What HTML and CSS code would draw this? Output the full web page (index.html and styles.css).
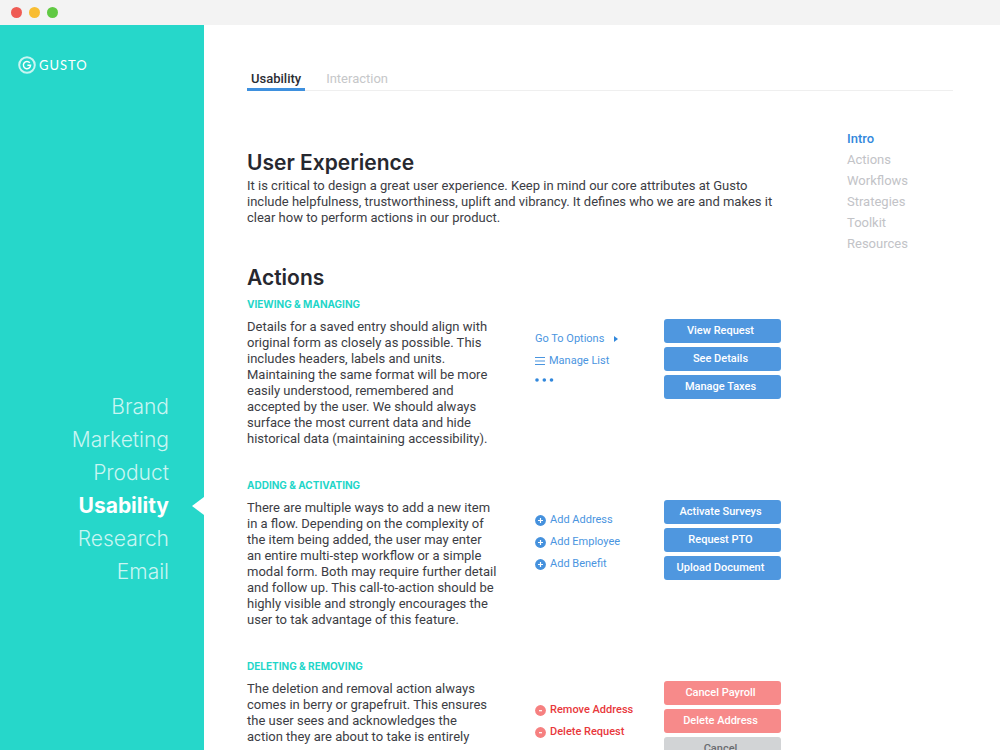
FILE: index.html
```html
<!DOCTYPE html>
<html lang="en">
<head>
<meta charset="utf-8">
<title>Gusto – Usability</title>
<link rel="stylesheet" href="styles.css">
</head>
<body>
<div class="window">
  <header class="titlebar">
    <span class="dot dot-red"></span>
    <span class="dot dot-yellow"></span>
    <span class="dot dot-green"></span>
  </header>
  <div class="shell">
    <aside class="sidebar">
      <a class="logo" href="#">
        <svg class="logo-mark" viewBox="0 0 18 18" aria-hidden="true">
          <circle cx="9" cy="9" r="7.8" fill="none" stroke="#fff" stroke-opacity=".75" stroke-width="2"/>
          <path d="M11.800 6.800A3.600 3.600 0 1 0 12.600 9.300H9.400" fill="none" stroke="#fff" stroke-width="1.400"/>
        </svg>
        <span class="logo-text">GUSTO</span>
      </a>
      <nav class="side-nav">
        <a href="#">Brand</a>
        <a href="#">Marketing</a>
        <a href="#">Product</a>
        <a class="active" href="#">Usability</a>
        <a href="#">Research</a>
        <a href="#">Email</a>
      </nav>
    </aside>
    <main class="main">
      <nav class="tabs">
        <a class="tab active" href="#">Usability</a>
        <a class="tab" href="#">Interaction</a>
      </nav>
      <div class="content">
        <div class="article">
          <section class="intro">
            <h1>User Experience</h1>
            <p>It is critical to design a great user experience. Keep in mind our core attributes at Gusto<br>include helpfulness, trustworthiness, uplift and vibrancy. It defines who we are and makes it<br>clear how to perform actions in our product.</p>
          </section>
          <h1>Actions</h1>
          <section class="block">
            <h2>VIEWING &amp; MANAGING</h2>
            <div class="row">
              <p>Details for a saved entry should align with<br>original form as closely as possible. This<br>includes headers, labels and units.<br>Maintaining the same format will be more<br>easily understood, remembered and<br>accepted by the user. We should always<br>surface the most current data and hide<br>historical data (maintaining accessibility).</p>
              <div class="links">
                <a href="#">Go To Options <svg class="caret" viewBox="0 0 4 6"><path d="M0 0 4 3 0 6z" fill="#3288dc"/></svg></a>
                <a href="#"><svg class="bars" viewBox="0 0 10 10"><path d="M0 1.5h10M0 5h10M0 8.5h10" stroke="#4a95df" stroke-width="1.2"/></svg>Manage List</a>
                <a class="more" href="#" aria-label="More"><svg class="dots" viewBox="0 0 20 4"><g fill="#3288dc"><circle cx="2" cy="2" r="1.8"/><circle cx="9.300" cy="2" r="1.8"/><circle cx="16.500" cy="2" r="1.8"/></g></svg></a>
              </div>
              <div class="buttons">
                <button type="button">View Request</button>
                <button type="button">See Details</button>
                <button type="button">Manage Taxes</button>
              </div>
            </div>
          </section>
          <section class="block">
            <h2>ADDING &amp; ACTIVATING</h2>
            <div class="row">
              <p>There are multiple ways to add a new item<br>in a flow. Depending on the complexity of<br>the item being added, the user may enter<br>an entire multi-step workflow or a simple<br>modal form. Both may require further detail<br>and follow up. This call-to-action should be<br>highly visible and strongly encourages the<br>user to tak advantage of this feature.</p>
              <div class="links">
                <a href="#"><svg class="badge" viewBox="0 0 11 11"><circle cx="5.500" cy="5.500" r="5.400" fill="#4591dd"/><path d="M5.500 3v5M3 5.500h5" stroke="#fff" stroke-width="1.2"/></svg>Add Address</a>
                <a href="#"><svg class="badge" viewBox="0 0 11 11"><circle cx="5.500" cy="5.500" r="5.400" fill="#4591dd"/><path d="M5.500 3v5M3 5.500h5" stroke="#fff" stroke-width="1.2"/></svg>Add Employee</a>
                <a href="#"><svg class="badge" viewBox="0 0 11 11"><circle cx="5.500" cy="5.500" r="5.400" fill="#4591dd"/><path d="M5.500 3v5M3 5.500h5" stroke="#fff" stroke-width="1.2"/></svg>Add Benefit</a>
              </div>
              <div class="buttons">
                <button type="button">Activate Surveys</button>
                <button type="button">Request PTO</button>
                <button type="button">Upload Document</button>
              </div>
            </div>
          </section>
          <section class="block">
            <h2>DELETING &amp; REMOVING</h2>
            <div class="row">
              <p>The deletion and removal action always<br>comes in berry or grapefruit. This ensures<br>the user sees and acknowledges the<br>action they are about to take is entirely</p>
              <div class="links danger">
                <a href="#"><svg class="badge" viewBox="0 0 11 11"><circle cx="5.500" cy="5.500" r="5.400" fill="#f68080"/><path d="M4 5.700h3" stroke="#fff" stroke-width="1.2"/></svg>Remove Address</a>
                <a href="#"><svg class="badge" viewBox="0 0 11 11"><circle cx="5.500" cy="5.500" r="5.400" fill="#f68080"/><path d="M4 5.700h3" stroke="#fff" stroke-width="1.2"/></svg>Delete Request</a>
              </div>
              <div class="buttons">
                <button class="red" type="button">Cancel Payroll</button>
                <button class="red" type="button">Delete Address</button>
                <button class="grey" type="button">Cancel</button>
              </div>
            </div>
          </section>
        </div>
        <nav class="toc">
          <a class="active" href="#">Intro</a>
          <a href="#">Actions</a>
          <a href="#">Workflows</a>
          <a href="#">Strategies</a>
          <a href="#">Toolkit</a>
          <a href="#">Resources</a>
        </nav>
      </div>
    </main>
  </div>
</div>
</body>
</html>
```
FILE: styles.css
```css
* { box-sizing: border-box; }
body {
  margin: 0;
  background: #fff;
  color: #3c3d44;
  font: 13px/16px Roboto, "Open Sans", sans-serif;
}
a { color: inherit; text-decoration: none; }
h1, h2, p { margin: 0; }
svg { display: block; flex: none; }

.window { display: flex; flex-direction: column; height: 100vh; overflow: hidden; }
.titlebar {
  display: flex;
  align-items: center;
  gap: 7px;
  flex: none;
  height: 25px;
  padding-left: 11px;
  background: #f3f3f3;
}
.dot { width: 11px; height: 11px; border-radius: 50%; }
.dot-red { background: #ef5b54; }
.dot-yellow { background: #f8bd32; }
.dot-green { background: #60c943; }

.shell { display: flex; flex: 1; min-height: 0; }
.sidebar {
  flex: none;
  width: 204px;
  background: #26d7ca;
  color: #fff;
}
.logo { display: flex; align-items: center; gap: 3px; padding: 31px 0 0 18px; }
.logo-mark { width: 18px; height: 18px; }
.logo-text { font: 13px/18px Lato, sans-serif; letter-spacing: 1px; }
.side-nav {
  display: flex;
  flex-direction: column;
  margin-top: 316px;
  padding-right: 35px;
  color: #c9f5f2;
  font-family: Inter, sans-serif;
  font-size: 21px;
  font-weight: 300;
  line-height: 33px;
  text-align: right;
}
.side-nav a { position: relative; }
.side-nav .active { color: #fff; font-weight: 700; }
.side-nav .active::after {
  content: "";
  position: absolute;
  top: 8px;
  right: -35px;
  border: solid transparent;
  border-width: 9px 12px 9px 0;
  border-right-color: #fff;
}

.main { flex: 1; min-width: 0; padding: 45px 47px 0 43px; }
.tabs { display: flex; gap: 17px; border-bottom: 1px solid #efefef; color: #c6c7c9; }
.tab { padding: 0 4px; line-height: 18px; margin-bottom: -1px; border-bottom: 3px solid transparent; }
.tab.active { border-color: #3e90de; color: #2b2c33; font-weight: 500; }

.content { display: flex; justify-content: space-between; padding-top: 37px; }
.article { flex: none; width: 534px; padding-top: 20px; white-space: nowrap; }
h1 { color: #27282f; font-family: Inter, sans-serif; font-size: 21px; font-weight: 600; line-height: 30px; }
.intro { margin-bottom: 37px; }
h2 { color: #1fd6c9; font: 700 10px/14px Inter, sans-serif; margin-bottom: 8px; }
.block { margin-bottom: 27px; padding-top: 4px; }
.row { display: grid; grid-template-columns: 288px 129px 117px; }
.links { display: flex; flex-direction: column; padding-top: 9px; color: #4a95df; font-size: 11px; line-height: 22px; }
.links a { display: flex; align-items: center; gap: 4px; height: 22px; }
.links .more { height: 16px; }
.links.danger { padding-top: 18px; color: #e8383c; font-weight: 500; }
.caret { width: 4px; height: 6px; margin-left: 6px; }
.bars { width: 10px; height: 10px; }
.dots { width: 20px; height: 4px; }
.badge { width: 11px; height: 11px; }
.buttons { display: flex; flex-direction: column; gap: 4px; }
button {
  height: 24px;
  padding: 0 4px 0 0;
  border: 0;
  border-radius: 3px;
  background: #4f97df;
  color: #fff;
  font: 500 11px/24px Roboto, "Open Sans", sans-serif;
}
button.red { background: #f78a8a; }
button.grey { background: #d2d4d6; color: #6a6c70; }

.toc { flex: none; width: 106px; color: #c2c3c7; line-height: 21px; }
.toc a { display: block; }
.toc .active { color: #3288dc; font-weight: 500; }
```
